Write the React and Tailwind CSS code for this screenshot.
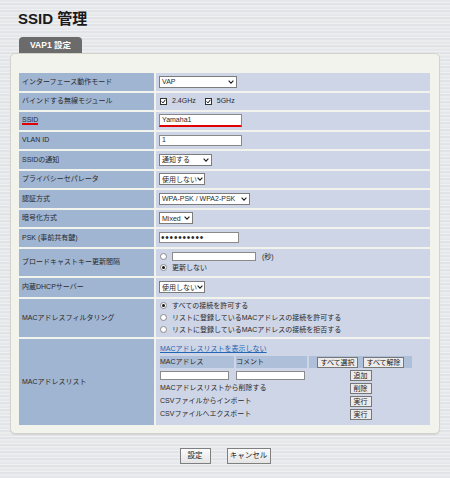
import React from 'react';

const font = "font-['Liberation_Sans','Noto_Sans_CJK_JP',sans-serif]";

function Chevron() {
  return (
    <svg width="6" height="4" viewBox="0 0 6 4" className="shrink-0">
      <path d="M0.6 0.6 L3 3.2 L5.4 0.6" stroke="#1e1e1e" strokeWidth="1.1" fill="none" />
    </svg>
  );
}

function Select({ className, children }) {
  return (
    <div className={`${className} h-[12px] bg-white border border-[#7c7c7c] flex items-center justify-between pl-[2px] pr-[2px] text-[7px] leading-none whitespace-nowrap`}>
      <span className="whitespace-nowrap">{children}</span>
      <Chevron />
    </div>
  );
}

function Checkbox() {
  return (
    <span className="w-[7px] h-[7px] bg-white border border-[#333] flex items-center justify-center">
      <svg width="5" height="5" viewBox="0 0 5 5">
        <path d="M0.6 2.4 L2 3.9 L4.4 0.8" stroke="#111" strokeWidth="1" fill="none" />
      </svg>
    </span>
  );
}

function Radio({ checked }) {
  return (
    <span className="w-[7px] h-[7px] rounded-full bg-white border border-[#8a8a8a] flex items-center justify-center shrink-0">
      {checked && <span className="w-[3px] h-[3px] rounded-full bg-[#111]" />}
    </span>
  );
}

function SmallButton({ children, className = 'w-[22px]' }) {
  return (
    <span className={`${className} h-[11px] bg-[#ebebeb] border border-[#777] flex items-center justify-center text-[7px] leading-none text-[#222] whitespace-nowrap`}>
      {children}
    </span>
  );
}

function Row({ label, h = 'h-[17.5px]', children }) {
  return (
    <div className={`grid grid-cols-[135px_1fr] gap-[2px] ${h}`}>
      <div className="bg-[#a0b5d2] pl-[3px] flex items-center whitespace-nowrap">{label}</div>
      <div className="bg-[#cdd5e7] pl-[3px] flex items-center whitespace-nowrap">{children}</div>
    </div>
  );
}

export default function App() {
  return (
    <div className={`w-[450px] h-[478px] overflow-hidden bg-[#e7e9ec] bg-[image:repeating-linear-gradient(180deg,#e5e7ea_0px,#e5e7ea_2px,#eef0f2_2px,#eef0f2_3px,#e1e3e6_3px,#e1e3e6_5px,#eaecee_5px,#eaecee_7px)] text-[#222] ${font}`}>
      <h1 className="h-[37px] pt-[10px] pl-[18px] text-[15px] leading-[18px] font-bold text-[#1a1a1a]">SSID 管理</h1>

      <div className="ml-[19px] w-[63px] h-[16px] bg-[#6b6b6b] rounded-t-[4px] flex items-center justify-center text-white text-[8.5px] font-bold">
        VAP1 設定
      </div>

      <div className="ml-[10px] w-[430px] h-[381px] bg-[#f3f3ee] border border-[#d3d3cc] rounded-[5px] shadow-[0_1px_1px_rgba(0,0,0,0.08)] pt-[19px] pl-[8px] pr-[9px] pb-[8px]">
        <div className="h-[352px] flex flex-col gap-[2px] text-[7px] leading-[10px] text-[#2a2a2a]">
          <Row label="インターフェース動作モード">
            <Select className="w-[78px]">VAP</Select>
          </Row>
          <Row label="バインドする無線モジュール">
            <div className="flex items-center pl-[1px]">
              <Checkbox />
              <span className="ml-[5px]">2.4GHz</span>
              <span className="ml-[9px]"><Checkbox /></span>
              <span className="ml-[5px]">5GHz</span>
            </div>
          </Row>
          <Row label={<span className="leading-[7px] border-b-2 border-[#e00000]">SSID</span>}>
            <div className="w-[83px] h-[13px] bg-white border border-[#8a8a8a] border-b-2 border-b-[#e00000] pl-[2px] flex items-center">Yamaha1</div>
          </Row>
          <Row label="VLAN ID">
            <div className="w-[83px] h-[11px] bg-white border border-[#8a8a8a] pl-[2px] flex items-center">1</div>
          </Row>
          <Row label="SSIDの通知">
            <Select className="w-[53px]">通知する</Select>
          </Row>
          <Row label="プライバシーセパレータ">
            <Select className="w-[46px]">使用しない</Select>
          </Row>
          <Row label="認証方式">
            <Select className="w-[91px]">WPA-PSK / WPA2-PSK</Select>
          </Row>
          <Row label="暗号化方式">
            <Select className="w-[34px]">Mixed</Select>
          </Row>
          <Row label="PSK (事前共有鍵)">
            <div className="w-[80px] h-[11px] bg-white border border-[#8a8a8a] pl-[1px] flex items-center text-[10px] tracking-[0.8px] leading-none">••••••••••</div>
          </Row>
          <Row label="ブロードキャストキー更新間隔" h="h-[27px]">
            <div className="flex flex-col pl-[1px]">
              <div className="h-[11px] flex items-center">
                <Radio />
                <span className="ml-[5px] w-[84px] h-[9px] bg-white border border-[#8a8a8a]" />
                <span className="ml-[6px]">(秒)</span>
              </div>
              <div className="h-[11px] flex items-center">
                <Radio checked />
                <span className="ml-[5px]">更新しない</span>
              </div>
            </div>
          </Row>
          <Row label="内蔵DHCPサーバー" h="h-[19px]">
            <Select className="w-[46px]">使用しない</Select>
          </Row>
          <Row label="MACアドレスフィルタリング" h="h-[38.5px]">
            <div className="flex flex-col pl-[1px]">
              {[
                ['すべての接続を許可する', true],
                ['リストに登録しているMACアドレスの接続を許可する', false],
                ['リストに登録しているMACアドレスの接続を拒否する', false],
              ].map(([t, c]) => (
                <div key={t} className="h-[12px] flex items-center">
                  <Radio checked={c} />
                  <span className="ml-[5px]">{t}</span>
                </div>
              ))}
            </div>
          </Row>
          <div className="flex-1 grid grid-cols-[135px_1fr] gap-[2px]">
            <div className="bg-[#a0b5d2] pl-[3px] flex items-center">MACアドレスリスト</div>
            <div className="bg-[#cdd5e7] pl-[4px] pt-[3px] flex flex-col gap-[1px] whitespace-nowrap">
              <div className="h-[13px] flex items-center">
                <span className="text-[#2466b3] underline">MACアドレスリストを表示しない</span>
              </div>
              <div className="h-[12px] grid grid-cols-[74px_71px_103px] gap-[2px]">
                <div className="bg-[#adbfd9] flex items-center">MACアドレス</div>
                <div className="bg-[#adbfd9] flex items-center">コメント</div>
                <div className="bg-[#adbfd9] flex items-center justify-center gap-[5px]">
                  <SmallButton className="w-[41px]">すべて選択</SmallButton>
                  <SmallButton className="w-[41px]">すべて解除</SmallButton>
                </div>
              </div>
              <div className="h-[12px] grid grid-cols-[74px_71px_103px] gap-[2px] items-center">
                <span className="w-[69px] h-[9px] bg-white border border-[#8a8a8a]" />
                <span className="w-[69px] h-[9px] bg-white border border-[#8a8a8a]" />
                <div className="flex justify-center"><SmallButton>追加</SmallButton></div>
              </div>
              {['MACアドレスリストから削除する', 'CSVファイルからインポート', 'CSVファイルへエクスポート'].map((t, i) => (
                <div key={t} className="h-[12px] grid grid-cols-[147px_103px] gap-[2px] items-center">
                  <span>{t}</span>
                  <div className="flex justify-center"><SmallButton>{i === 0 ? '削除' : '実行'}</SmallButton></div>
                </div>
              ))}
            </div>
          </div>
        </div>
      </div>

      <div className="mt-[14px] flex justify-center gap-[16px]">
        <button className="w-[31px] h-[16px] bg-[linear-gradient(#fbfbfb,#e4e4e4)] border border-[#7f7f7f] text-[7.5px] text-[#222]">設定</button>
        <button className="w-[44px] h-[16px] bg-[linear-gradient(#fbfbfb,#e4e4e4)] border border-[#7f7f7f] text-[7.5px] text-[#222]">キャンセル</button>
      </div>
    </div>
  );
}
